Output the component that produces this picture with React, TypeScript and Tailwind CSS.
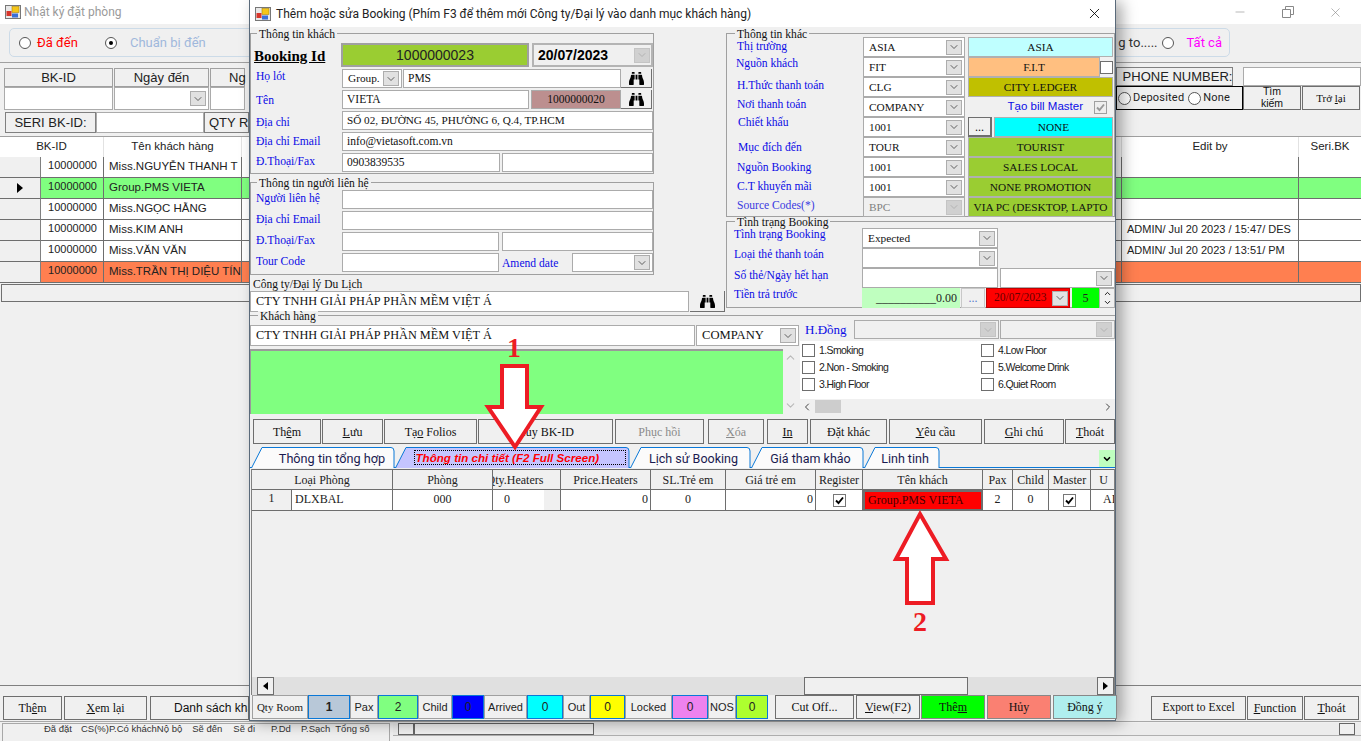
import type { ReactNode } from 'react';
import { ChevronDown, ChevronLeft, ChevronRight, ChevronUp, Minus, X } from 'lucide-react';
import { FaBinoculars } from 'react-icons/fa';

const serif = "font-['Liberation_Serif',serif]";
const sans = "font-['Liberation_Sans',sans-serif]";
const ui = "font-['Roboto',sans-serif]";

function AppIcon() {
  return (
    <svg width="16" height="16" viewBox="0 0 16 16">
      <rect x="0.5" y="1.5" width="15" height="13" fill="#e8e8e8" stroke="#777" />
      <rect x="7" y="2.5" width="7" height="6" fill="#f5c518" stroke="#a8860c" strokeWidth="0.6" />
      <rect x="1.5" y="7" width="5" height="5" fill="#d8352a" />
      <rect x="7" y="9.5" width="6" height="4" fill="#3a6fd8" />
    </svg>
  );
}

function Arrow({ disabled }: { disabled?: boolean }) {
  return (
    <div className={`flex h-[15px] w-[16px] shrink-0 items-center justify-center border ${disabled ? 'border-[#c4c4c4] bg-[#d0d0d0] text-[#a8a8a8]' : 'border-[#adadad] bg-[#e1e1e1] text-[#333]'}`}>
      <ChevronDown size={12} strokeWidth={1.5} />
    </div>
  );
}

function Field({ className = '', children }: { className?: string; children?: ReactNode }) {
  return (
    <div className={`flex h-full items-center overflow-hidden whitespace-nowrap border border-[#ababab] bg-white px-[4px] text-[11.5px] text-[#111] ${serif} ${className}`}>
      {children}
    </div>
  );
}

function Combo({ className = '', text, disabled }: { className?: string; text?: string; disabled?: boolean }) {
  return (
    <div className={`flex h-full items-center justify-between overflow-hidden border border-[#ababab] pl-[5px] pr-[2px] text-[11.3px] ${disabled ? 'bg-[#f0f0f0] text-[#808080]' : 'bg-white text-[#111]'} ${serif} ${className}`}>
      <span className="whitespace-nowrap">{text}</span>
      <Arrow disabled={disabled} />
    </div>
  );
}

function Btn({ className = '', children }: { className?: string; children?: ReactNode }) {
  return (
    <div className={`flex h-full shrink-0 items-center justify-center overflow-hidden whitespace-nowrap border border-[#6e6e6e] bg-[#f0f0f0] text-[12px] text-[#111] ${serif} ${className}`}>
      <span>{children}</span>
    </div>
  );
}

function Binoc({ className = '' }: { className?: string }) {
  return (
    <div className={`flex h-full shrink-0 items-center justify-center border-b border-r border-[#707070] bg-[#f0f0f0] text-black ${className}`}>
      <FaBinoculars size={15} />
    </div>
  );
}

function Label({ className = '', children }: { className?: string; children: ReactNode }) {
  return <div className={`flex shrink-0 items-center whitespace-nowrap text-[11.6px] text-[#0c0ce6] ${serif} ${className}`}>{children}</div>;
}

function Legend({ className = '', children }: { className?: string; children: ReactNode }) {
  return <div className={`absolute -top-[5px] bg-[#f0f0f0] px-[2px] text-[11.6px] leading-[12px] text-[#111] ${serif} ${className}`}>{children}</div>;
}

function Radio({ checked, className = '' }: { checked?: boolean; className?: string }) {
  return (
    <span className={`flex h-[12px] w-[12px] shrink-0 items-center justify-center rounded-full border border-[#555] bg-white ${className}`}>
      {checked ? <span className="h-[4px] w-[4px] rounded-full bg-black" /> : null}
    </span>
  );
}

function Check({ checked, muted }: { checked?: boolean; muted?: boolean }) {
  return (
    <span className={`flex h-[13px] w-[13px] shrink-0 items-center justify-center border ${muted ? 'border-[#a0a0a0] bg-[#eee]' : checked ? 'border-[#777] bg-white' : 'border-[#6e6e6e] bg-white'}`}>
      {checked ? (
        <svg width="11" height="11" viewBox="0 0 11 11">
          <path d="M2 5.5 L4.5 8 L9 2.5" fill="none" stroke={muted ? '#999' : '#000'} strokeWidth="1.9" />
        </svg>
      ) : null}
    </span>
  );
}

function Tab({ w, children, selected }: { w: number; children: ReactNode; selected?: boolean }) {
  const h = 21;
  return (
    <div className="relative flex h-[21px] shrink-0 items-center justify-center" style={{ width: w }}>
      <svg className="absolute inset-0" width={w} height={h}>
        <path d={`M0.5,${h} L11,0.5 H${w - 4} Q${w - 1},0.5 ${w - 1},4 V${h}`} fill={selected ? '#c5c5ff' : '#fbfbfb'} stroke="#0a78d7" />
      </svg>
      <div className="relative">{children}</div>
    </div>
  );
}

const guestRows = [
  { name: 'Miss.NGUYỄN THANH T', bg: 'bg-white', by: '' },
  { name: 'Group.PMS VIETA', bg: 'bg-[#80ff80]', by: '', current: true },
  { name: 'Miss.NGỌC HẰNG', bg: 'bg-white', by: '' },
  { name: 'Miss.KIM ANH', bg: 'bg-white', by: 'ADMIN/ Jul 20 2023 / 15:47/ DES' },
  { name: 'Miss.VĂN VĂN', bg: 'bg-white', by: 'ADMIN/ Jul 20 2023 / 13:51/ PM' },
  { name: 'Miss.TRẦN THỊ DIỆU TÍN', bg: 'bg-[#ff7f50]', by: '' },
];

const otherRows = [
  { label: 'Thị trường', lc: 'pl-[10px] pb-[1px]', combo: 'ASIA', box: 'ASIA', bc: 'bg-[#bfffff]' },
  { label: 'Nguồn khách', lc: 'pl-[9px] pb-[6px]', combo: 'FIT', box: 'F.I.T', bc: 'bg-[#ffbf80]', check: true },
  { label: 'H.Thức thanh toán', lc: 'pl-[10px] pb-[3px]', combo: 'CLG', box: 'CITY LEDGER', bc: 'bg-[#c0c000]' },
  { label: 'Nơi thanh toán', lc: 'pl-[10px] pb-[5px]', combo: 'COMPANY' },
  { label: 'Chiết khấu', lc: 'pl-[11px] pb-[8px]', combo: '1001', box: 'NONE', bc: 'bg-[#00ffff]', dots: true },
  { label: 'Mục đích đến', lc: 'pl-[11px] pt-[1px]', combo: 'TOUR', box: 'TOURIST', bc: 'bg-[#9acd32]' },
  { label: 'Nguồn Booking', lc: 'pl-[10px] pt-[1px]', combo: '1001', box: 'SALES LOCAL', bc: 'bg-[#9acd32]' },
  { label: 'C.T khuyến mãi', lc: 'pl-[10px]', combo: '1001', box: 'NONE PROMOTION', bc: 'bg-[#9acd32]' },
  { label: 'Source Codes(*)', lc: 'pl-[10px] pb-[3px]', combo: 'BPC', box: 'VIA PC (DESKTOP, LAPTO', bc: 'bg-[#9acd32]', disabled: true },
];

const actionButtons = [
  { t: <>Th<u>ê</u>m</>, c: 'w-[68px]' },
  { t: <><u>L</u>ưu</>, c: 'ml-[1px] w-[61px]' },
  { t: <>Tạ<u>o</u> Folios</>, c: 'ml-[1px] w-[93px]' },
  { t: <>Hủy BK-ID</>, c: 'ml-[1px] w-[135px]' },
  { t: <>Phục hồi</>, c: 'ml-[2px] w-[89px] text-[#8a8a8a]!' },
  { t: <><u>X</u>óa</>, c: 'ml-[4px] w-[56px] text-[#8a8a8a]!' },
  { t: <u>In</u>, c: 'ml-[3px] w-[41px]' },
  { t: <>Đặt khác</>, c: 'ml-[2px] w-[77px]' },
  { t: <><u>Y</u>êu cầu</>, c: 'ml-[2px] w-[93px]' },
  { t: <><u>G</u>hi chú</>, c: 'ml-[2px] w-[80px]' },
  { t: <><u>T</u>hoát</>, c: 'ml-[1px] w-[50px]' },
];

const gridHead = ['Loại Phòng', 'Phòng', 'Qty.Heaters', 'Price.Heaters', 'SL.Trẻ em', 'Giá trẻ em', 'Register', 'Tên khách', 'Pax', 'Child', 'Master', 'U'];

const counters = [
  { l: 'Qty Room', lw: 'w-[56px]', v: '1', vw: 'w-[42px]', vc: 'bg-[#b8c8d8] font-bold', serifLabel: true },
  { l: 'Pax', lw: 'w-[28px]', v: '2', vw: 'w-[40px]', vc: 'bg-[#80ff80]' },
  { l: 'Child', lw: 'w-[34px]', v: '0', vw: 'w-[32px]', vc: 'bg-[#0000ff]' },
  { l: 'Arrived', lw: 'w-[43px]', v: '0', vw: 'w-[36px]', vc: 'bg-[#00ffff]' },
  { l: 'Out', lw: 'w-[27px]', v: '0', vw: 'w-[35px]', vc: 'bg-[#ffff00]' },
  { l: 'Locked', lw: 'w-[47px]', v: '0', vw: 'w-[36px]', vc: 'bg-[#ee82ee]' },
  { l: 'NOS', lw: 'w-[28px]', v: '0', vw: 'w-[32px]', vc: 'bg-[#adff2f]' },
];

function BookingDialog() {
  return (
    <div className="absolute left-[249px] top-0 flex h-[721px] w-[867px] flex-col border-x border-b border-[#5a6a7a] bg-[#f0f0f0] shadow-[6px_2px_14px_rgba(0,0,0,0.35)]">
      <div className={`flex h-[27px] shrink-0 items-center bg-white pl-[5px] pr-[12px] text-[12px] text-[#222] ${ui}`}>
        <AppIcon />
        <span className="ml-[5px] flex-1">Thêm hoặc sửa Booking (Phím F3 để thêm mới Công ty/Đại lý vào danh mục khách hàng)</span>
        <X size={17} strokeWidth={1.2} className="text-black" />
      </div>

      <div className="flex h-[288px] shrink-0">
        <div className="w-[476px] pt-[6px]">
          <div className="relative h-[141px] w-[404px] border border-[#a0a0a0] pt-[9px]">
            <Legend className="left-[6px]">Thông tin khách</Legend>
            <div className="flex h-[24px]">
              <div className={`w-[90px] pl-[3px] pt-[2px] text-[15px] font-bold text-black underline ${serif}`}>Booking Id</div>
              <div className={`flex w-[188px] items-center justify-center border-2 border-[#a0a0a0] bg-[#9acd32] text-[14px] text-[#222] ${sans}`}>1000000023</div>
              <div className="ml-[3px] flex w-[121px] items-center justify-between border-2 border-[#b4b4b4] pl-[4px] pr-[1px]">
                <span className={`text-[14px] font-bold text-black ${sans}`}>20/07/2023</span>
                <Arrow disabled />
              </div>
            </div>
            <div className="mt-[2px] flex h-[19px]">
              <Label className="w-[91px] pl-[5px] pb-[3px]">Họ lót</Label>
              <Combo text="Group." className="w-[60px]" />
              <Field className="ml-[1px] w-[218px]">PMS</Field>
              <Binoc className="w-[31px]" />
            </div>
            <div className="mt-[2px] flex h-[19px]">
              <Label className="w-[91px] pl-[5px] pt-[2px]">Tên</Label>
              <Field className="w-[187px]">VIETA</Field>
              <Field className="ml-[2px] w-[90px] justify-center bg-[#bc8f8f]!">1000000020</Field>
              <Binoc className="w-[31px]" />
            </div>
            <div className="mt-[2px] flex h-[19px]">
              <Label className="w-[91px] pl-[5px] pt-[5px]">Địa chỉ</Label>
              <Field className="w-[311px] text-[11.2px]!">SỐ 02, ĐƯỜNG 45, PHƯỜNG 6, Q.4, TP.HCM</Field>
            </div>
            <div className="mt-[2px] flex h-[19px]">
              <Label className="w-[91px] pl-[5px]">Địa chỉ Email</Label>
              <Field className="w-[311px]">info@vietasoft.com.vn</Field>
            </div>
            <div className="mt-[2px] flex h-[19px]">
              <Label className="w-[91px] pl-[5px] pb-[2px]">Đ.Thoại/Fax</Label>
              <Field className="w-[158px]">0903839535</Field>
              <Field className="ml-[2px] w-[151px]" />
            </div>
          </div>

          <div className="relative mt-[8px] h-[93px] w-[404px] border border-[#a0a0a0] pt-[7px]">
            <Legend className="left-[6px]">Thông tin người liên hệ</Legend>
            <div className="flex h-[19px]">
              <Label className="w-[91px] pl-[5px] pb-[2px]">Người liên hệ</Label>
              <Field className="w-[311px]" />
            </div>
            <div className="mt-[2px] flex h-[19px]">
              <Label className="w-[91px] pl-[5px] pb-[2px]">Địa chỉ Email</Label>
              <Field className="w-[311px]" />
            </div>
            <div className="mt-[2px] flex h-[19px]">
              <Label className="w-[91px] pl-[5px] pb-[2px]">Đ.Thoại/Fax</Label>
              <Field className="w-[157px]" />
              <Field className="ml-[3px] w-[151px]" />
            </div>
            <div className="mt-[2px] flex h-[19px]">
              <Label className="w-[91px] pl-[5px] pb-[2px]">Tour Code</Label>
              <Field className="w-[157px]" />
              <Label className="ml-[3px] w-[70px] pt-[2px]">Amend date</Label>
              <Combo className="w-[81px]" />
            </div>
          </div>

          <div className={`mt-[3px] h-[13px] pl-[3px] text-[11.5px] leading-[12px] text-[#111] ${serif}`}>Công ty/Đại lý Du Lịch</div>
          <div className="flex h-[21px]">
            <Field className="w-[439px] pl-[5px] text-[12.3px]!">CTY TNHH GIẢI PHÁP PHẦN MỀM VIỆT Á</Field>
            <Binoc className="ml-[1px] w-[35px]" />
          </div>
        </div>

        <div className="ml-0 w-[389px] pt-[6px]">
          <div className="relative h-[184px] border border-[#a0a0a0] pt-[3px]">
            <Legend className="left-[8px]">Thông tin khác</Legend>
            {otherRows.map((row) => (
              <div key={row.label} className="flex h-[20px]">
                <Label className={`w-[136px] ${row.lc}`}>
                  <span className={row.disabled ? 'text-[#3a3ae0]' : ''}>{row.label}</span>
                </Label>
                <Combo text={row.combo} disabled={row.disabled} className="w-[102px]" />
                <div className="ml-[3px] flex w-[145px]">
                  {row.dots ? <Btn className="mr-[2px] w-[24px] border-b-2 border-r-2">...</Btn> : null}
                  {row.box ? (
                    <div className={`flex h-full flex-1 items-center justify-center overflow-hidden whitespace-nowrap border border-[#b0b0b0] text-[11.3px] text-[#111] ${row.bc} ${serif}`}>{row.box}</div>
                  ) : (
                    <div className={`flex flex-1 items-center justify-end gap-[11px] pr-[6px] text-[11.5px] text-[#0c0ce6] ${sans}`}>
                      <span>Tạo bill Master</span>
                      <Check checked muted />
                    </div>
                  )}
                  {row.check ? (
                    <div className="flex w-[13px] items-center justify-end">
                      <Check />
                    </div>
                  ) : null}
                </div>
              </div>
            ))}
          </div>

          <div className="relative mt-[4px] h-[87px] border-y border-l border-[#a0a0a0] pt-[6px]">
            <Legend className="left-[8px]">Tình trạng Booking</Legend>
            <div className="flex h-[20px]">
              <Label className="w-[135px] pl-[7px] pb-[6px]">Tình trạng Booking</Label>
              <Combo text="Expected" className="w-[136px]" />
            </div>
            <div className="flex h-[20px]">
              <Label className="w-[135px] pl-[7px] pb-[6px]">Loại thẻ thanh toán</Label>
              <Combo className="w-[136px]" />
            </div>
            <div className="flex h-[20px]">
              <Label className="w-[135px] pl-[7px] pb-[5px]">Số thẻ/Ngày hết hạn</Label>
              <Field className="w-[136px]" />
              <Combo className="ml-[2px] w-[115px]" />
            </div>
            <div className="flex h-[20px]">
              <Label className="w-[135px] pl-[7px] pb-[7px]">Tiền trả trước</Label>
              <div className={`flex w-[98px] items-center justify-end bg-[#bfffbf] pr-[3px] text-[12px] text-[#222] ${serif}`}>__________0.00</div>
              <Btn className="ml-[1px] w-[24px] border-[#c8c8c8] text-[#5577cc]!">...</Btn>
              <div className={`ml-[1px] flex w-[84px] items-center justify-between border border-[#c00000] bg-[#ff0000] pl-[7px] pr-[1px] text-[11.5px] text-[#600] ${serif}`}>
                <span>20/07/2023</span>
                <Arrow />
              </div>
              <div className={`ml-[2px] flex w-[27px] items-center justify-center bg-[#00ff00] text-[12px] text-[#222] ${serif}`}>5</div>
              <div className="flex w-[16px] flex-col border border-[#b0b0b0] bg-[#f0f0f0] text-[#111]">
                <ChevronUp size={9} strokeWidth={2.5} className="mx-auto" />
                <ChevronDown size={9} strokeWidth={2.5} className="mx-auto" />
              </div>
            </div>
          </div>
        </div>
      </div>

      <div className="relative flex h-[99px] shrink-0 border-t border-[#a0a0a0]">
        <Legend className="left-[8px]">Khách hàng</Legend>
        <div className="w-[550px] pt-[9px]">
          <div className="flex h-[21px]">
            <Field className="w-[445px] pl-[5px] text-[12.3px]!">CTY TNHH GIẢI PHÁP PHẦN MỀM VIỆT Á</Field>
            <Combo text="COMPANY" className="ml-[1px] w-[103px] text-[12.6px]!" />
          </div>
          <div className="mt-[3px] flex h-[65px]">
            <div className="w-[533px] border-t-2 border-l border-[#9a9a9a] bg-[#80ff80]" />
            <div className="flex w-[15px] flex-col items-center justify-between py-[2px] text-[#b8b8b8]">
              <ChevronUp size={13} />
              <ChevronDown size={13} />
            </div>
          </div>
        </div>
        <div className="w-[315px] pt-[4px]">
          <div className="flex h-[19px]">
            <Label className="w-[54px] pl-[5px] text-[13px]!">H.Đồng</Label>
            <Combo disabled className="w-[145px]" />
            <Combo disabled className="ml-[1px] w-[115px]" />
          </div>
          <div className="mt-[2px] flex h-[73px] flex-col bg-white">
            <div className={`grid flex-1 grid-cols-[179px_136px] content-start gap-y-[4px] pl-[2px] pt-[3px] text-[10.5px] leading-[13px] tracking-[-0.6px] text-[#222] ${sans}`}>
              {['1.Smoking', '4.Low Floor', '2.Non - Smoking', '5.Welcome Drink', '3.High Floor', '6.Quiet Room'].map((item) => (
                <div key={item} className="flex items-center gap-[4px]">
                  <Check />
                  <span>{item}</span>
                </div>
              ))}
            </div>
            <div className="flex h-[15px] items-center bg-[#f0f0f0] text-[#444]">
              <ChevronLeft size={12} className="ml-[1px]" />
              <div className="ml-[2px] h-[13px] w-[26px] bg-[#cdcdcd]" />
              <div className="flex-1" />
              <ChevronRight size={12} className="mr-[1px]" />
            </div>
          </div>
        </div>
      </div>

      <div className="mt-[5px] flex h-[25px] shrink-0 pl-[3px]">
        {actionButtons.map((b, i) => (
          <Btn key={i} className={b.c}>{b.t}</Btn>
        ))}
      </div>

      <div className="relative mt-[3px] flex h-[21px] shrink-0 border-b border-[#0a78d7] pl-[1px]">
        <Tab w={144}><span className={`pl-[18px] text-[12.7px] text-[#1a1a50] ${ui}`}>Thông tin tổng hợp</span></Tab>
        <Tab w={235} selected>
          <div className={`ml-[14px] w-[212px] border border-dotted border-black pl-[1px] text-[11.6px] font-bold italic leading-[13px] text-[#ff0000] ${sans}`}>Thông tin chi tiết (F2 Full Screen)</div>
        </Tab>
        <Tab w={121}><span className={`pl-[6px] text-[12.5px] text-[#1a1a50] ${ui}`}>Lịch sử Booking</span></Tab>
        <Tab w={113}><span className={`pl-[6px] text-[12.5px] text-[#1a1a50] ${ui}`}>Giá tham khảo</span></Tab>
        <Tab w={76}><span className={`pl-[6px] text-[12.5px] text-[#1a1a50] ${ui}`}>Linh tinh</span></Tab>
        <div className="absolute right-0 top-[3px] flex h-[17px] w-[16px] items-center justify-center bg-[#bfffbf]">
          <ChevronDown size={10} strokeWidth={4} className="text-black" />
        </div>
      </div>

      <div className="mt-[1px] ml-[1px] flex flex-1 flex-col overflow-hidden border-x border-[#808080]">
        <div className={`grid h-[42px] shrink-0 grid-cols-[141px_100px_68px_90px_75px_90px_47px_120px_30px_36px_42px_26px] grid-rows-[21px_21px] overflow-hidden text-[12px] text-[#222] ${serif}`}>
          {gridHead.map((h) => (
            <div key={h} className={`flex items-center justify-center overflow-hidden whitespace-nowrap border-b border-r border-t border-[#6e6e6e] bg-[#f0f0f0] ${h === 'Qty.Heaters' ? 'pr-[23px]' : ''}`}>{h}</div>
          ))}
          <div className="flex border-b border-r border-[#6e6e6e] bg-white">
            <div className="w-[40px] border-r border-[#6e6e6e] bg-[#f0f0f0] text-center leading-[16px]">1</div>
            <div className="pl-[3px] leading-[19px]">DLXBAL</div>
          </div>
          <div className="border-b border-r border-[#6e6e6e] bg-white text-center leading-[19px]">000</div>
          <div className="flex border-b border-r border-[#6e6e6e] bg-white leading-[19px]">
            <div className="w-[51px] pl-[11px]">0</div>
            <div className="flex-1 bg-[#f0f0f0]" />
          </div>
          <div className="border-b border-r border-[#6e6e6e] bg-white pr-[2px] text-right leading-[19px]">0</div>
          <div className="border-b border-r border-[#6e6e6e] bg-white text-center leading-[19px]">0</div>
          <div className="border-b border-r border-[#6e6e6e] bg-white pr-[2px] text-right leading-[19px]">0</div>
          <div className="flex items-center justify-center border-b border-r border-[#6e6e6e] bg-white"><Check checked /></div>
          <div className="whitespace-nowrap border-2 border-[#6e6e6e] bg-[#ff0000] pl-[3px] leading-[17px] text-[#400]">Group.PMS VIETA</div>
          <div className="border-b border-r border-[#6e6e6e] bg-white text-center leading-[19px]">2</div>
          <div className="border-b border-r border-[#6e6e6e] bg-white text-center leading-[19px]">0</div>
          <div className="flex items-center justify-center border-b border-r border-[#6e6e6e] bg-white"><Check checked /></div>
          <div className="overflow-hidden border-b border-[#6e6e6e] bg-white pl-[12px] leading-[19px]">AD</div>
        </div>
        <div className="flex-1" />
        <div className="flex h-[18px] shrink-0 bg-[#e0e0e0] pl-[5px]">
          <div className="flex w-[17px] items-center justify-center border border-[#6e6e6e] bg-[#f0f0f0]"><span className="h-0 w-0 border-y-[4px] border-r-[5px] border-y-transparent border-r-black" /></div>
          <div className="ml-[530px] w-[164px] border border-[#6e6e6e] bg-[#f0f0f0]" />
          <div className="flex-1" />
          <div className="flex w-[17px] items-center justify-center border border-[#6e6e6e] bg-[#f0f0f0]"><span className="h-0 w-0 border-y-[4px] border-l-[5px] border-y-transparent border-l-black" /></div>
        </div>
      </div>

      <div className="mb-[1px] flex h-[24px] shrink-0 pl-[2px] text-[11px]">
        {counters.map((c) => (
          <div key={c.l} className="flex">
            <div className={`flex items-center justify-center border border-[#a0a0a0] bg-[#f0f0f0] text-[#222] ${c.serifLabel ? serif : sans} ${c.lw}`}>{c.l}</div>
            <div className={`flex items-center justify-center border border-[#0a78d7] text-[12px] text-[#222] ${sans} ${c.vw} ${c.vc}`}>{c.v}</div>
          </div>
        ))}
        <Btn className="ml-[7px] w-[79px]">Cut Off...</Btn>
        <Btn className="ml-[2px] w-[64px]"><u>V</u>iew(F2)</Btn>
        <Btn className="ml-[1px] w-[64px] border-[#888] bg-[#00ff00]!">Thê<u>m</u></Btn>
        <Btn className="ml-[2px] w-[64px] border-[#888] bg-[#fa8072]!">Hủy</Btn>
        <Btn className="ml-[2px] w-[64px] border-[#888] bg-[#afeeee]!">Đồn<u>g</u> ý</Btn>
      </div>
    </div>
  );
}

export default function App() {
  return (
    <div className={`relative flex h-[741px] w-[1361px] flex-col overflow-hidden bg-[#f0f0f0] text-[#222] ${sans}`}>
      {/* back window: booking journal */}
      <div className={`flex h-[24px] shrink-0 items-center bg-white pl-[5px] pr-[18px] text-[12px] text-[#9a9a9a] ${ui}`}>
        <AppIcon />
        <span className="ml-[3px] flex-1">Nhật ký đặt phòng</span>
        <Minus size={14} strokeWidth={1} className="text-[#888]" />
        <svg width="12" height="12" viewBox="0 0 12 12" className="ml-[35px]">
          <path d="M0.5 3.5 H8.5 V11.5 H0.5 Z M3.5 3.5 V0.5 H11.5 V8.5 H8.5" fill="none" stroke="#888" />
        </svg>
        <X size={15} strokeWidth={1} className="ml-[34px] text-[#888]" />
      </div>

      <div className="ml-[9px] mt-[4px] flex h-[29px] w-[1221px] shrink-0 items-center rounded-[5px] border border-[#ccdbe8] pl-[9px] text-[13px]">
        <Radio />
        <span className={`ml-[6px] w-[56px] text-[#ff0000] ${ui}`}>Đã đến</span>
        <Radio checked className="ml-[12px]" />
        <span className={`ml-[13px] text-[#a0b8dc] ${ui}`}>Chuẩn bị đến</span>
        <div className="flex-1" />
        <span className={`text-[#333] ${ui}`}>g to.....</span>
        <Radio className="ml-[4px]" />
        <span className={`ml-[13px] mr-[7px] text-[#ff00ff] ${ui}`}>Tất cả</span>
      </div>

      <div className="mt-[5px] flex h-[75px] shrink-0 justify-between border-y border-[#a0a0a0] pl-[4px]">
        <div className="pt-[5px]">
          <div className="flex h-[19px] text-[13px]">
            <div className="flex w-[109px] items-center justify-center border border-[#a0a0a0]">BK-ID</div>
            <div className="ml-[1px] flex w-[95px] items-center justify-center border border-[#a0a0a0]">Ngày đến</div>
            <div className="ml-[1px] flex w-[35px] items-center border border-[#a0a0a0] pl-[18px]">Ng</div>
          </div>
          <div className="flex h-[23px]">
            <Field className="w-[109px]" />
            <Combo className="ml-[1px] w-[95px]" />
            <Field className="ml-[1px] w-[35px]" />
          </div>
          <div className="ml-[1px] mt-[2px] flex h-[21px] text-[13px]">
            <div className="flex w-[91px] items-center justify-center border border-[#808080]">SERI BK-ID:</div>
            <Field className="w-[108px]" />
            <div className="flex w-[45px] items-center whitespace-nowrap border border-[#808080] pl-[4px]">QTY R</div>
          </div>
        </div>
        <div className="flex w-[245px] flex-col pt-[4px]">
          <div className="flex h-[19px]">
            <div className="flex w-[117px] items-center justify-center whitespace-nowrap border border-[#808080] pl-[6px] text-[13px]">PHONE NUMBER:</div>
            <Field className="ml-[10px] w-[118px]" />
          </div>
          <div className="flex h-[24px]">
            <div className={`flex w-[127px] items-center border border-black pl-[1px] text-[11px] tracking-[0.2px] ${ui}`}>
              <Radio className="h-[13px] w-[13px]" />
              <span className="ml-[2px]">Deposited</span>
              <Radio className="ml-[4px] h-[13px] w-[13px]" />
              <span className="ml-[2px]">None</span>
            </div>
            <div className={`flex h-full w-[58px] shrink-0 flex-col items-center justify-end overflow-hidden border border-[#6e6e6e] text-[10.5px] leading-[12px] text-[#111] ${sans}`}>
              <span>Tìm</span>
              <span>kiếm</span>
            </div>
            <Btn className={`ml-[1px] w-[58px] text-[11px]! ${sans}`}>Trở <u>l</u>ại</Btn>
          </div>
        </div>
      </div>

      <div className="grid shrink-0 grid-cols-[41px_63px_138px_880px_177px_62px] grid-rows-[20px_repeat(6,21px)] text-[11px] text-[#222]">
        <div className="col-span-2 flex items-center justify-center border-r border-[#e2e2e2] bg-white text-[11.5px]">BK-ID</div>
        <div className="flex items-center justify-center border-r border-[#e2e2e2] bg-white text-[11.5px]">Tên khách hàng</div>
        <div className="border-r border-[#e2e2e2] bg-white" />
        <div className="flex items-center justify-center border-r border-[#e2e2e2] bg-white text-[11.5px]">Edit by</div>
        <div className="flex items-center justify-center bg-white text-[11.5px]">Seri.BK</div>
        {guestRows.map((row) => [
          <div key={`${row.name}-h`} className="flex items-center justify-center border-b border-r border-[#6e6e6e] border-r-[#808080] bg-[#f0f0f0]">
            {row.current ? <span className="h-0 w-0 border-y-[5px] border-l-[6px] border-y-transparent border-l-black" /> : null}
          </div>,
          <div key={`${row.name}-id`} className={`border-b border-r border-[#6e6e6e] pr-[6px] text-right leading-[17px] ${row.bg}`}>10000000</div>,
          <div key={`${row.name}-n`} className={`overflow-hidden whitespace-nowrap border-b border-r border-[#6e6e6e] pl-[5px] text-[11.5px] leading-[18px] ${row.bg}`}>{row.name}</div>,
          <div key={`${row.name}-m`} className={`border-b border-r border-[#6e6e6e] ${row.bg}`} />,
          <div key={`${row.name}-b`} className={`overflow-hidden whitespace-nowrap border-b border-r border-[#6e6e6e] pl-[5px] leading-[19px] ${row.bg}`}>{row.by}</div>,
          <div key={`${row.name}-s`} className={`border-b border-[#6e6e6e] ${row.bg}`} />,
        ])}
      </div>

      <div className="ml-[1px] mt-[1px] h-[18px] shrink-0 border border-[#707070]" />
      <div className="h-[384px] shrink-0 border-b border-[#808080]" />

      <div className="mt-[9px] flex h-[27px] shrink-0 justify-between border-b border-[#a8a8a8] py-[1px] pl-[3px] pr-[2px]">
        <div className="flex">
          <Btn className={`w-[59px] ${sans}`}>Th<u>ê</u>m</Btn>
          <Btn className={`ml-[2px] w-[83px] ${sans}`}><u>X</u>em lại</Btn>
          <div className={`ml-[3px] flex h-full w-[99px] items-center overflow-hidden whitespace-nowrap border border-[#6e6e6e] pl-[23px] text-[12px] text-[#111] ${sans}`}>Danh sách khá</div>
        </div>
        <div className="flex">
          <Btn className={`w-[95px] text-[11.5px]! ${sans}`}>Export to Excel</Btn>
          <Btn className="ml-[1px] w-[56px]"><u>F</u>unction</Btn>
          <Btn className="ml-[1px] w-[55px]"><u>T</u>hoát</Btn>
        </div>
      </div>

      <div className="mt-[1px] flex flex-1 overflow-hidden">
        <div className="ml-[2px] flex h-[24px] w-[388px] whitespace-nowrap border border-[#a8a8a8] pl-[41px] text-[9.5px] leading-[9px] text-[#333]">
          <span>Đã đặt</span>
          <span className="ml-[9px]">CS(%)P.Có khách</span>
          <span>Nộ bộ</span>
          <span className="ml-[10px]">Sẽ đến</span>
          <span className="ml-[11px]">Sẽ đi</span>
          <span className="ml-[16px]">P.Dd</span>
          <span className="ml-[10px]">P.Sạch</span>
          <span className="ml-[5px]">Tổng số</span>
        </div>
        <div className="ml-[3px] flex h-[13px] flex-1 border-b border-[#b0b0b0] bg-[#ececec] pl-[5px] pr-[6px]">
          <div className="w-[16px] border border-[#666] bg-[#f0f0f0]" />
          <div className="w-[180px] border border-[#666] bg-[#f0f0f0]" />
          <div className="flex-1" />
          <div className="w-[16px] border border-[#666] bg-[#f0f0f0]" />
        </div>
      </div>

      <BookingDialog />

      {/* red callouts drawn on top of the screenshot */}
      <svg className="pointer-events-none absolute left-0 top-0" width="1361" height="741">
        <path d="M502 366 H527 V407 H541 L515 447 L488 407 H502 Z" fill="#fff" stroke="#ed1c24" strokeWidth="4" />
        <path d="M920 514 L946 559 H933 V603 H907 V559 H896 Z" fill="#fff" stroke="#ed1c24" strokeWidth="4" />
      </svg>
      <span className={`pointer-events-none absolute left-[507px] top-[332px] text-[28px] font-bold leading-[32px] text-[#ed1c24] ${serif}`}>1</span>
      <span className={`pointer-events-none absolute left-[913px] top-[606px] text-[28px] font-bold leading-[32px] text-[#ed1c24] ${serif}`}>2</span>
    </div>
  );
}
